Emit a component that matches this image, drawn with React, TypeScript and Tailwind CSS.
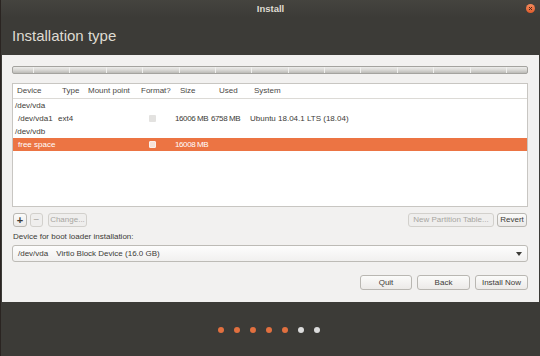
import React from "react";

interface PartitionRow {
  device: string;
  indent: number;
  type?: string;
  mount?: string;
  format?: boolean;
  size?: string;
  used?: string;
  system?: string;
  selected?: boolean;
}

const rows: PartitionRow[] = [
  { device: "/dev/vda", indent: 2 },
  {
    device: "/dev/vda1",
    indent: 5,
    type: "ext4",
    format: true,
    size: "16006 MB",
    used: "6758 MB",
    system: "Ubuntu 18.04.1 LTS (18.04)",
  },
  { device: "/dev/vdb", indent: 2 },
  { device: "free space", indent: 5, format: true, size: "16008 MB", selected: true },
];

const cols = "grid grid-cols-[45px_26px_53px_39px_39px_35px_1fr] items-center";

const Button = ({
  label,
  className = "",
  disabled = false,
}: {
  label: string;
  className?: string;
  disabled?: boolean;
}) => (
  <div
    className={`flex items-center justify-center rounded-[3px] border text-[8px] leading-none ${
      disabled
        ? "border-[#d2d0cc] bg-[#efeeed] text-[#a8a6a2]"
        : "border-[#b9b7b2] bg-gradient-to-b from-[#fbfbfa] to-[#eceae8] text-[#3c3b37]"
    } ${className}`}
  >
    {label}
  </div>
);

const App: React.FC = () => {
  return (
    <div className="w-[540px] h-[356px] bg-[#3c3b37] flex flex-col overflow-hidden font-['Liberation_Sans',sans-serif] border-l-[1px] border-[#2a2421]">
      {/* title bar */}
      <div className="relative h-[18px] flex items-center justify-center bg-gradient-to-b from-[#45443f] to-[#3c3b37]">
        <span className="text-[9.5px] font-bold text-[#dfdbd2]">Install</span>
        <div className="absolute right-[5px] top-[4px] w-[9px] h-[9px] rounded-full bg-gradient-to-b from-[#f48a5c] to-[#df5b2a] flex items-center justify-center">
          <svg width="5" height="5" viewBox="0 0 5 5">
            <path d="M1 1 L4 4 M4 1 L1 4" stroke="#4a2a1d" strokeWidth="1" />
          </svg>
        </div>
      </div>

      {/* header */}
      <div className="h-[37px] pl-[11px] flex items-center">
        <span className="text-[15px] text-[#dfdbd2]">Installation type</span>
      </div>

      {/* main panel */}
      <div className="mx-[1px] h-[247px] bg-[#f2f1f0] pl-[10px] pr-[11px] pt-[11px] flex flex-col">
        {/* partition bar */}
        <div className="relative h-[8px] rounded-[2px] border border-[#a4a39f] bg-gradient-to-b from-[#ececea] via-[#d9d8d5] to-[#bcbbb7] flex justify-between px-[20px]">
          {Array.from({ length: 14 }).map((_, i) => (
            <span key={i} className="w-[1px] h-full bg-[#f0f0ee]" />
          ))}
        </div>

        {/* table */}
        <div className="mt-[9px] h-[124px] border border-[#c8c6c2] bg-white flex flex-col text-[8px] text-[#3c3b37]">
          <div className={`${cols} h-[15px] pl-[4px] border-b border-[#dcdad6] text-[#4a4945]`}>
            <span>Device</span>
            <span>Type</span>
            <span>Mount point</span>
            <span>Format?</span>
            <span>Size</span>
            <span>Used</span>
            <span>System</span>
          </div>
          {rows.map((r) => (
            <div
              key={r.device}
              className={`${cols} h-[13px] ${r.selected ? "bg-[#ec7443] text-white" : ""}`}
            >
              <span className={r.indent === 2 ? "pl-[2px]" : "pl-[5px]"}>{r.device}</span>
              <span>{r.type}</span>
              <span>{r.mount}</span>
              <span className="pl-[12px] flex items-center">
                {r.format && (
                  <span
                    className={`w-[7px] h-[7px] rounded-[1px] ${
                      r.selected ? "bg-[#f7e3d9] border border-[#fbefe9]" : "bg-[#e3e2e0]"
                    }`}
                  />
                )}
              </span>
              <span className="-ml-[1px] tracking-[-0.4px] whitespace-nowrap">{r.size}</span>
              <span className="-ml-[4px] tracking-[-0.4px] whitespace-nowrap">{r.used}</span>
              <span className="whitespace-nowrap">{r.system}</span>
            </div>
          ))}
        </div>

        {/* table actions */}
        <div className="mt-[6px] h-[14px] flex items-stretch">
          <Button label="+" className="ml-[1px] w-[14px] text-[11px] font-bold" />
          <Button label="−" disabled className="ml-[3px] w-[13px] text-[10px]" />
          <Button label="Change..." disabled className="ml-[5px] w-[39px]" />
          <div className="flex-1" />
          <Button label="New Partition Table..." disabled className="w-[86px]" />
          <Button label="Revert" className="ml-[3px] w-[30px] mr-[1px]" />
        </div>

        {/* boot loader */}
        <div className="mt-[4px] h-[12px] pl-[1px] flex items-center text-[8px] text-[#3c3b37]">
          Device for boot loader installation:
        </div>
        <div className="mt-[2px] h-[17px] rounded-[3px] border border-[#bdbbb6] bg-gradient-to-b from-[#fdfdfd] to-[#f1f0ef] flex items-center pl-[5px] pr-[5px] text-[8px] text-[#3c3b37]">
          <span>/dev/vda</span>
          <span className="ml-[8px]">Virtio Block Device (16.0 GB)</span>
          <div className="flex-1" />
          <svg width="6" height="4" viewBox="0 0 6 4">
            <path d="M0 0 H6 L3 4 Z" fill="#3c3b37" />
          </svg>
        </div>

        {/* navigation */}
        <div className="mt-[13px] h-[15px] flex justify-end gap-[5px]">
          <Button label="Quit" className="w-[52px]" />
          <Button label="Back" className="w-[53px]" />
          <Button label="Install Now" className="w-[53px]" />
        </div>
      </div>

      {/* progress dots */}
      <div className="flex-1 flex items-center pl-[217px] gap-[10px] pt-[1px]">
        {[0, 1, 2, 3, 4].map((i) => (
          <span key={i} className="w-[6px] h-[6px] rounded-full bg-[#e2703f]" />
        ))}
        {[5, 6].map((i) => (
          <span key={i} className="w-[6px] h-[6px] rounded-full bg-[#dcdcdc]" />
        ))}
      </div>
    </div>
  );
};

export default App;
